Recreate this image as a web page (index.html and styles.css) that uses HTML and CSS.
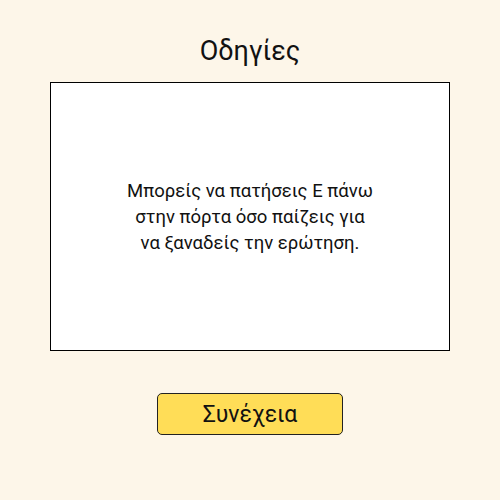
FILE: index.html
```html
<!DOCTYPE html>
<html lang="el">
<head>
<meta charset="utf-8">
<link rel="stylesheet" href="styles.css">
</head>
<body>
<main class="screen">
  <h1 class="title">Οδηγίες</h1>
  <section class="card">
    <p class="card-text">Μπορείς να πατήσεις Ε πάνω στην πόρτα όσο παίζεις για να ξαναδείς την ερώτηση.</p>
  </section>
  <button class="continue">Συνέχεια</button>
</main>
</body>
</html>
```
FILE: styles.css
```css
html, body {
  margin: 0;
  padding: 0;
  background: #fdf6e9;
  font-family: Roboto, sans-serif;
  color: #111;
}
.screen {
  width: 500px;
  height: 500px;
  display: flex;
  flex-direction: column;
  align-items: center;
  box-sizing: border-box;
  padding-top: 34px;
}
.title {
  margin: 0;
  font-size: 27px;
  font-weight: 400;
  line-height: 34px;
  height: 48px;
}
.card {
  width: 400px;
  height: 269px;
  box-sizing: border-box;
  border: 1px solid #000;
  background: #fff;
  display: flex;
  align-items: center;
  justify-content: center;
}
.card-text {
  margin: 0;
  width: 249px;
  text-align: center;
  font-size: 18.5px;
  line-height: 26px;
}
.continue {
  margin-top: 42px;
  width: 186px;
  height: 42px;
  box-sizing: border-box;
  border: 1px solid #222;
  border-radius: 5px;
  background: #ffdd57;
  font-family: Roboto, sans-serif;
  font-size: 23px;
  color: #111;
  padding: 0;
}
```
